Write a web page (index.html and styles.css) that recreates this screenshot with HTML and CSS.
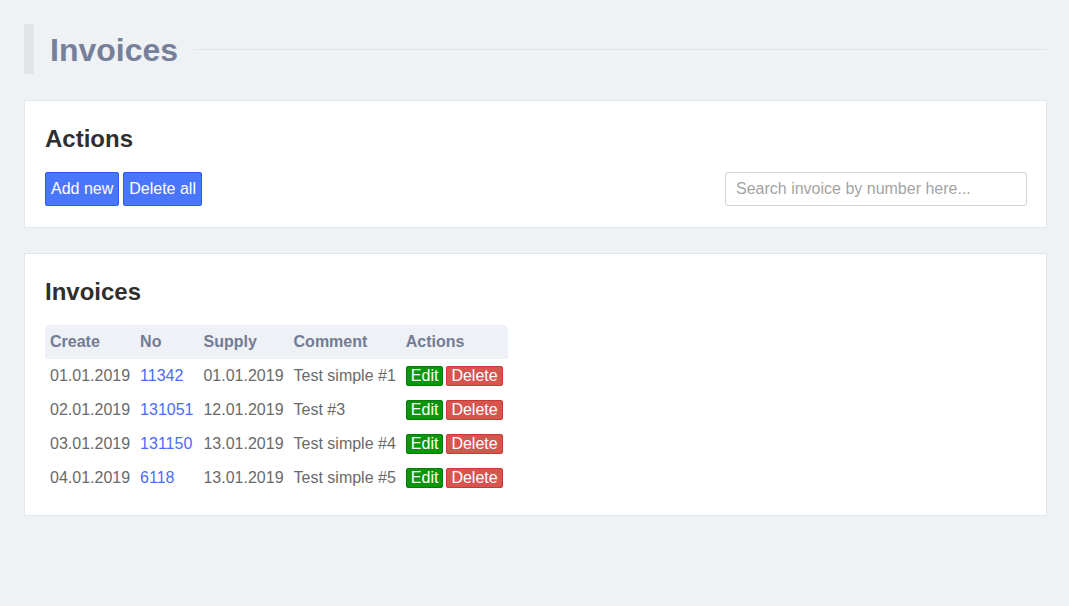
FILE: index.html
```html
<!DOCTYPE html>
<html>
<head>
<meta charset="utf-8">
<link rel="stylesheet" href="styles.css">
</head>
<body>
<div class="page">
  <header class="page-header">
    <span class="bar"></span>
    <h1 class="title">Invoices</h1>
    <span class="rule"></span>
  </header>

  <section class="card card-actions">
    <h2 class="card-title">Actions</h2>
    <div class="toolbar">
      <div class="btn-group">
        <button class="btn btn-primary">Add new</button>
        <button class="btn btn-primary">Delete all</button>
      </div>
      <input class="search" type="text" placeholder="Search invoice by number here...">
    </div>
  </section>

  <section class="card card-list">
    <h2 class="card-title">Invoices</h2>
    <table class="table">
      <thead>
        <tr><th>Create</th><th>No</th><th>Supply</th><th>Comment</th><th>Actions</th></tr>
      </thead>
      <tbody>
        <tr><td>01.01.2019</td><td><a class="link" href="#">11342</a></td><td>01.01.2019</td><td>Test simple #1</td><td><div class="row-actions"><span class="tag tag-edit">Edit</span><span class="tag tag-delete">Delete</span></div></td></tr>
        <tr><td>02.01.2019</td><td><a class="link" href="#">131051</a></td><td>12.01.2019</td><td>Test #3</td><td><div class="row-actions"><span class="tag tag-edit">Edit</span><span class="tag tag-delete">Delete</span></div></td></tr>
        <tr><td>03.01.2019</td><td><a class="link" href="#">131150</a></td><td>13.01.2019</td><td>Test simple #4</td><td><div class="row-actions"><span class="tag tag-edit">Edit</span><span class="tag tag-delete">Delete</span></div></td></tr>
        <tr><td>04.01.2019</td><td><a class="link" href="#">6118</a></td><td>13.01.2019</td><td>Test simple #5</td><td><div class="row-actions"><span class="tag tag-edit">Edit</span><span class="tag tag-delete">Delete</span></div></td></tr>
      </tbody>
    </table>
  </section>
</div>
</body>
</html>
```
FILE: styles.css
```css
* { box-sizing: border-box; }
html, body { margin: 0; padding: 0; }
body {
  background: #eef2f5;
  font-family: "Liberation Sans", Arial, sans-serif;
  font-size: 16px;
  color: #666;
}
.page {
  padding: 24px 22px 24px 24px;
}
.page-header {
  display: flex;
  align-items: center;
  height: 50px;
}
.bar {
  width: 10px;
  height: 50px;
  background: #e2e4e7;
  flex: none;
}
.title {
  margin: 2px 16px 0 16px;
  font-size: 32px;
  font-weight: bold;
  color: #76809a;
  line-height: 1;
}
.rule {
  flex: 1;
  height: 1px;
  background: #e0e4e9;
}
.card {
  margin-top: 26px;
  background: #fff;
  border: 1px solid #e3e6ea;
  padding: 24px 20px 20px 20px;
}
.card-actions { padding-bottom: 21px; }
.card-list { margin-top: 25px; }
.card-title {
  margin: 0 0 19px 0;
  font-size: 24px;
  line-height: 28px;
  font-weight: bold;
  color: #2f2f2f;
}
.toolbar {
  display: flex;
  align-items: center;
  justify-content: space-between;
}
.btn-group {
  display: flex;
  gap: 4px;
}
.btn {
  font-family: "Liberation Sans", Arial, sans-serif;
  font-size: 16px;
  line-height: 18px;
  height: 34px;
  padding: 0 5px;
  border-radius: 2px;
  cursor: pointer;
}
.btn-primary {
  background: #4a76fd;
  border: 1px solid #2c5cf2;
  color: #fff;
}
.search {
  width: 302px;
  height: 34px;
  margin-right: -1px;
  border: 1px solid #d3d3d3;
  border-radius: 3px;
  padding: 0 10px;
  font-family: "Liberation Sans", Arial, sans-serif;
  font-size: 16px;
  color: #555;
  outline: none;
}
.search::placeholder { color: #a4a4a4; }
.table {
  border-collapse: separate;
  border-spacing: 0;
}
.table thead tr th {
  background: #eef1f5;
  text-align: left;
  font-weight: bold;
  color: #737c94;
  padding: 0 5px;
  height: 34px;
  line-height: 18px;
}
.table thead th:first-child { border-top-left-radius: 5px; }
.table thead th:last-child { border-top-right-radius: 5px; }
.table td {
  padding: 0 5px;
  height: 34px;
  line-height: 18px;
  color: #6a6a6a;
  white-space: nowrap;
  vertical-align: middle;
}
.link {
  color: #4a6cf7;
  text-decoration: none;
}
.row-actions {
  display: flex;
  gap: 3px;
}
.tag {
  display: inline-block;
  color: #fff;
  font-size: 16px;
  line-height: 18px;
  padding: 0 4px;
  border-radius: 2px;
}
.tag-edit {
  background: #0a960a;
  border: 1px solid #077a07;
}
.tag-delete {
  background: #d9534f;
  border: 1px solid #c73a36;
}
```
